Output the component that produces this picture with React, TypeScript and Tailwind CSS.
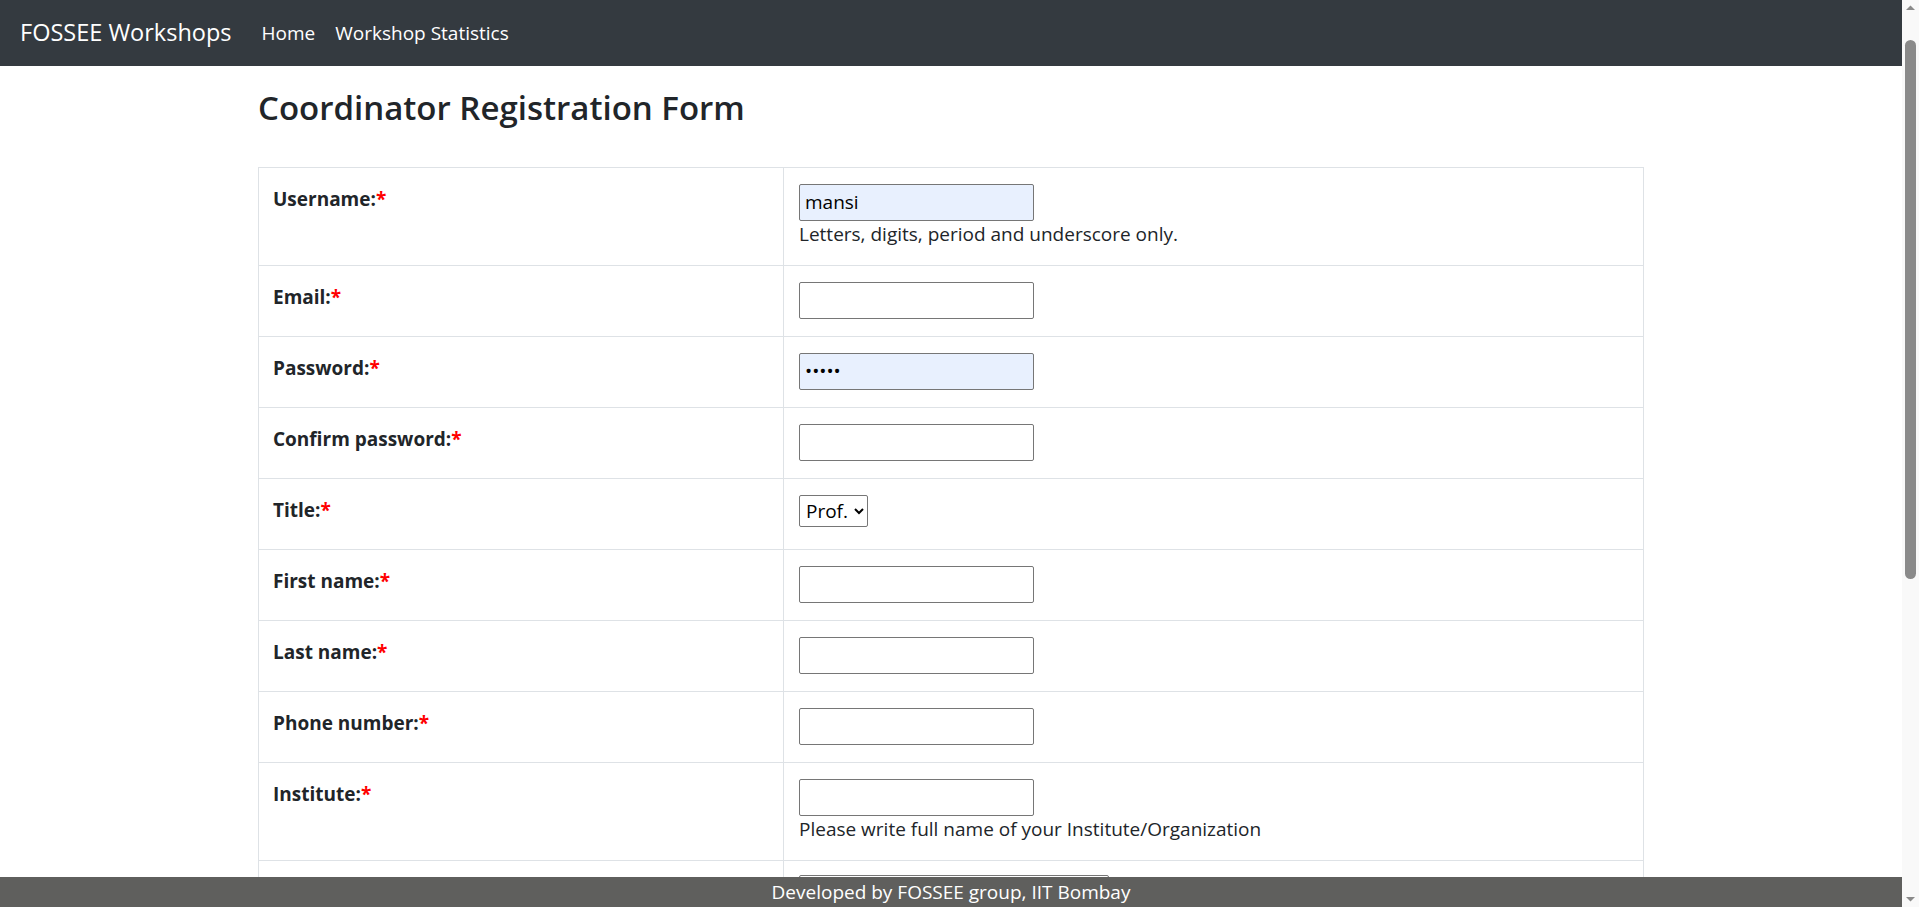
import React from 'react'

type Field = {
  label: string
  kind: 'text' | 'password' | 'select'
  value?: string
  filled?: boolean
  help?: string
  options?: string[]
  wide?: boolean
}

const fields: Field[] = [
  { label: 'Username:', kind: 'text', value: 'mansi', filled: true, help: 'Letters, digits, period and underscore only.' },
  { label: 'Email:', kind: 'text' },
  { label: 'Password:', kind: 'password', value: 'mansi', filled: true },
  { label: 'Confirm password:', kind: 'password' },
  { label: 'Title:', kind: 'select', options: ['Prof.', 'Dr.', 'Shri', 'Smt', 'Ku', 'Mr.', 'Mrs.', 'Ms.'] },
  { label: 'First name:', kind: 'text' },
  { label: 'Last name:', kind: 'text' },
  { label: 'Phone number:', kind: 'text' },
  { label: 'Institute:', kind: 'text', help: 'Please write full name of your Institute/Organization' },
  { label: 'Department:', kind: 'select', wide: true, options: ['Computer Science', 'Information Technology', 'Civil Engineering'] },
  { label: 'Location:', kind: 'text', help: 'Place/City' },
  { label: 'State:', kind: 'select', wide: true, options: ['---------', 'Maharashtra', 'Gujarat'] },
  { label: 'How did you hear about us:', kind: 'select', wide: true, options: ['FOSSEE website', 'Google', 'Social Media'] },
]

function Control({ f }: { f: Field }) {
  if (f.kind === 'select') {
    return (
      <div className="h-[37px]">
        <select
          defaultValue={f.options?.[0]}
          className={
            f.wide
              ? '-mt-[2px] h-[37px] w-[310px] rounded-[2px] border border-[#767676] bg-white px-1 text-[19px] text-black'
              : 'h-[32px] rounded-[2px] border border-[#767676] bg-white px-0.5 text-[19px] text-black'
          }
        >
          {f.options?.map((o) => (
            <option key={o}>{o}</option>
          ))}
        </select>
      </div>
    )
  }
  return (
    <input
      type={f.kind}
      defaultValue={f.value}
      className={
        'block h-[37px] w-[235px] rounded-[2px] border border-[#767676] px-[5px] text-[19px] text-black outline-none ' +
        (f.filled ? 'bg-[#e8f0fe]' : 'bg-white')
      }
    />
  )
}

export default function App() {
  return (
    <div className="min-h-screen bg-white font-['Open_Sans','Noto_Sans',sans-serif] text-[#212529]">
      <div className="mr-[17px] pb-[60px]">
        {/* navbar */}
        <nav className="flex h-[66px] items-center bg-[#343a40] pl-[20px]">
          <span className="mr-[20px] text-[23.5px] text-white">FOSSEE Workshops</span>
          <a className="px-[10px] text-[19px] text-white">Home</a>
          <a className="px-[10px] text-[19px] text-white">Workshop Statistics</a>
        </nav>

        <div className="mx-auto w-[1386px]">
          <h2 className="mb-[39px] mt-[22px] text-[33px] font-semibold leading-[1.2]">Coordinator Registration Form</h2>

          <table className="w-full border-collapse border border-[#dee2e6] text-[19px]">
            <tbody>
              {fields.map((f) => (
                <tr key={f.label} className="border-t border-[#dee2e6]">
                  <td className="w-[525px] border-r border-[#dee2e6] px-[14px] pb-[17px] pt-[16px] align-top font-bold leading-[30px]">
                    {f.label}
                    <span className="text-[#ff0000]">*</span>
                  </td>
                  <td className="px-[15px] pb-[17px] pt-[16px] align-top">
                    <Control f={f} />
                    {f.help && <div className="leading-[27px]">{f.help}</div>}
                  </td>
                </tr>
              ))}
            </tbody>
          </table>

          <button className="mt-[20px] rounded-[5px] bg-[#198754] px-[15px] py-[7px] text-[19px] text-white">Register</button>
        </div>
      </div>

      {/* footer */}
      <footer className="fixed bottom-0 left-0 right-[17px] h-[30px] bg-[#5f5f5d] text-center text-[19px] leading-[30px] text-white">
        Developed by FOSSEE group, IIT Bombay
      </footer>

      {/* window scrollbar */}
      <div className="fixed right-0 top-0 flex h-screen w-[17px] flex-col items-center bg-[#f9f9f9]">
        <svg width="17" height="17" viewBox="0 0 17 17">
          <path d="M4 10 L8.5 5.5 L13 10 Z" fill="#8a8a8a" />
        </svg>
        <div className="mt-[23px] h-[539px] w-[11px] rounded-full bg-[#8a8a8a]" />
        <div className="flex-1" />
        <svg width="17" height="17" viewBox="0 0 17 17">
          <path d="M4 7 L8.5 11.5 L13 7 Z" fill="#8a8a8a" />
        </svg>
      </div>
    </div>
  )
}
